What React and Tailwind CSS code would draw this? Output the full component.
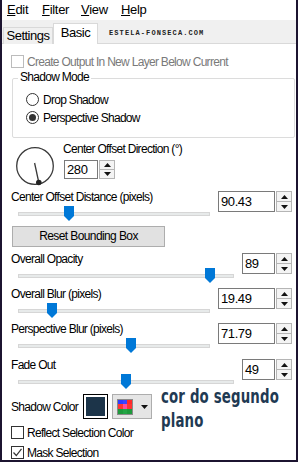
import React from 'react';

const font = "font-['Liberation_Sans',Arial,sans-serif]";

const Tri = ({ up }) => (
  <svg width="7" height="4" viewBox="0 0 7 4">
    <path d={up ? 'M0 4 L3.5 0 L7 4 Z' : 'M0 0 L7 0 L3.5 4 Z'} fill="#111" />
  </svg>
);

const Spin = () => (
  <div className="flex flex-col w-[16px] h-full ml-[1px]">
    <div className="flex-1 flex items-center justify-center border border-[#b5b5b5] bg-[#f4f4f4]">
      <Tri up />
    </div>
    <div className="flex-1 flex items-center justify-center border border-t-0 border-[#b5b5b5] bg-[#f4f4f4]">
      <Tri />
    </div>
  </div>
);

const NumBox = ({ value, w, h = 'h-[21px]', extra = '' }) => (
  <div className={`flex ${h} ${extra}`}>
    <div className={`${w} h-full border border-[#7a7a7a] bg-white pl-[2px] flex items-center text-[13px] tracking-[-0.4px]`}>{value}</div>
    <Spin />
  </div>
);

const Thumb = ({ left }) => (
  <svg className="absolute top-[-7px]" style={{ left }} width="10" height="15" viewBox="0 0 10 15">
    <path d="M0 0 H10 V10 L5 15 L0 10 Z" fill="#0078d7" />
  </svg>
);

const SliderRow = ({ label, value, wide, thumb, h = 'h-[35px]' }) => (
  <div className={`flex items-start ${h}`}>
    <div className="flex-1 flex flex-col">
      <div className="h-[15px] leading-[15px]">{label}</div>
      <div className="relative h-[4px] mt-[7px] ml-[7px] mr-[8px] border border-[#d6d6d6] bg-[#e7eaea]">
        <Thumb left={thumb} />
      </div>
    </div>
    <NumBox value={value} w={wide ? 'w-[57px]' : 'w-[33px]'} extra="mt-[1px]" />
  </div>
);

const Check = ({ checked, disabled }) => (
  <div
    className={`w-[13px] h-[13px] border bg-white flex items-center justify-center ${
      disabled ? 'border-[#bcbcbc]' : 'border-[#333]'
    }`}
  >
    {checked && (
      <svg width="11" height="11" viewBox="0 0 11 11">
        <path d="M1.5 5.5 L4.3 8.5 L9.5 1.8" fill="none" stroke="#333" strokeWidth="1.2" />
      </svg>
    )}
  </div>
);

const Radio = ({ on }) => (
  <div className="w-[13px] h-[13px] rounded-full border border-[#333] bg-white flex items-center justify-center">
    {on && <div className="w-[7px] h-[7px] rounded-full bg-[#333]" />}
  </div>
);

const palette = ['#2f3dff', '#3a46ff', '#ff2a2a', '#ff3434', '#ff4f9a', '#ff3434', '#1e9a3c', '#23a545', '#1e9a3c'];

export default function App() {
  return (
    <div className={`${font} text-[12px] tracking-[-0.7px] text-black w-[298px] h-[462px] bg-white flex flex-col border-l-2 border-r-2 border-b-2 border-[#1c1430]`}>
      {/* menu */}
      <div className="h-[20px] flex items-center pl-[5px] text-[13px] tracking-[-0.3px]">
        <span className="w-[35px]"><u>E</u>dit</span>
        <span className="w-[39px]"><u>F</u>ilter</span>
        <span className="w-[40px]"><u>V</u>iew</span>
        <span><u>H</u>elp</span>
      </div>

      {/* tabs */}
      <div className="h-[24px] flex items-end bg-[#f0f0f0] border-b border-[#d9d9d9]">
        <div className="h-[17px] w-[50px] ml-[1px] border border-b-0 border-[#d9d9d9] bg-[#f0f0f0] flex items-center justify-center text-[13px] tracking-[-0.5px] -mb-px">
          Settings
        </div>
        <div className="h-[21px] w-[45px] border border-b-0 border-[#d9d9d9] bg-white flex items-center justify-center text-[13px] tracking-[-0.5px] -mb-px pb-[3px]">
          Basic
        </div>
        <div className="ml-[11px] mb-[5px] font-['Liberation_Mono',monospace] font-bold text-[7px] tracking-[1.1px] text-[#222]">
          ESTELA-FONSECA.COM
        </div>
      </div>

      {/* panel */}
      <div className="flex-1 flex flex-col pl-[9px] pr-[4px]">
        <div className="flex items-center h-[15px] mt-[10px] text-[#7a7a7a]">
          <Check disabled />
          <span className="ml-[3px]">Create Output In New Layer Below Current</span>
        </div>

        <div className="relative w-[283px] h-[60px] mt-[9px] ml-[1px] border border-[#dcdcdc] rounded-[2px] flex flex-col pt-[13px] pl-[13px]">
          <span className="absolute top-[-9px] left-[5px] bg-white px-[2px] leading-[15px]">Shadow Mode</span>
          <div className="flex items-center h-[15px]">
            <Radio />
            <span className="ml-[4px]">Drop Shadow</span>
          </div>
          <div className="flex items-center h-[15px] mt-[3px]">
            <Radio on />
            <span className="ml-[4px]">Perspective Shadow</span>
          </div>
        </div>

        <div className="flex items-start h-[48px] mt-[4px]">
          <svg className="mt-[5px] ml-[4px]" width="40" height="40" viewBox="0 0 40 40">
            <circle cx="20" cy="19" r="18.3" fill="none" stroke="#3a3a3a" strokeWidth="1.3" />
            <line x1="19.6" y1="16" x2="23.8" y2="35.5" stroke="#3a3a3a" strokeWidth="1.3" />
            <circle cx="23.8" cy="35.5" r="2.8" fill="#222" />
          </svg>
          <div className="ml-[8px] flex flex-col">
            <div className="h-[15px] leading-[15px]">Center Offset Direction (°)</div>
            <NumBox value="280" w="w-[34px]" h="h-[19px]" extra="mt-[3px] ml-[1px]" />
          </div>
        </div>

        <SliderRow label="Center Offset Distance (pixels)" value="90.43" wide thumb={45} h="h-[36px]" />

        <button className="w-[153px] h-[21px] ml-[1px] border border-[#adadad] bg-[#e1e1e1] text-center leading-[19px] tracking-[-0.6px]">
          Reset Bounding Box
        </button>

        <div className="h-[5px]" />
        <SliderRow label="Overall Opacity" value="89" thumb={186} />
        <SliderRow label="Overall Blur (pixels)" value="19.49" wide thumb={28} />
        <SliderRow label="Perspective Blur (pixels)" value="71.79" wide thumb={107} h="h-[36px]" />
        <SliderRow label="Fade Out" value="49" thumb={102} />

        <div className="flex items-start mt-[1px]">
          <div className="flex flex-col">
            <div className="flex items-center h-[25px]">
              <span className="w-[72px]">Shadow Color</span>
              <div className="w-[25px] h-[25px] border border-black bg-white p-[2px]">
                <div className="w-full h-full bg-[#1c3449]" />
              </div>
              <div className="w-[40px] h-[25px] ml-[4px] border border-[#adadad] bg-[#e5e5e5] flex items-center pl-[4px]">
                <div className="grid grid-cols-3 w-[16px] h-[16px] border border-[#8a8a8a]">
                  {palette.map((c, i) => (
                    <div key={i} style={{ background: c }} />
                  ))}
                </div>
                <svg className="ml-[8px]" width="7" height="4" viewBox="0 0 7 4">
                  <path d="M0 0 L7 0 L3.5 4 Z" fill="#111" />
                </svg>
              </div>
            </div>
            <div className="flex items-center h-[15px] mt-[6px]">
              <Check />
              <span className="ml-[3px]">Reflect Selection Color</span>
            </div>
            <div className="flex items-center h-[15px] mt-[5px]">
              <Check checked />
              <span className="ml-[3px]">Mask Selection</span>
            </div>
          </div>
          <div className="ml-[9px] -mt-[9px] whitespace-nowrap origin-left scale-x-[0.76] font-['DejaVu_Sans_Condensed','DejaVu_Sans',sans-serif] font-bold text-[19.5px] leading-[24px] tracking-[0.2px] text-[#1f3a53]">
            cor do segundo
            <br />
            plano
          </div>
        </div>
      </div>
    </div>
  );
}
